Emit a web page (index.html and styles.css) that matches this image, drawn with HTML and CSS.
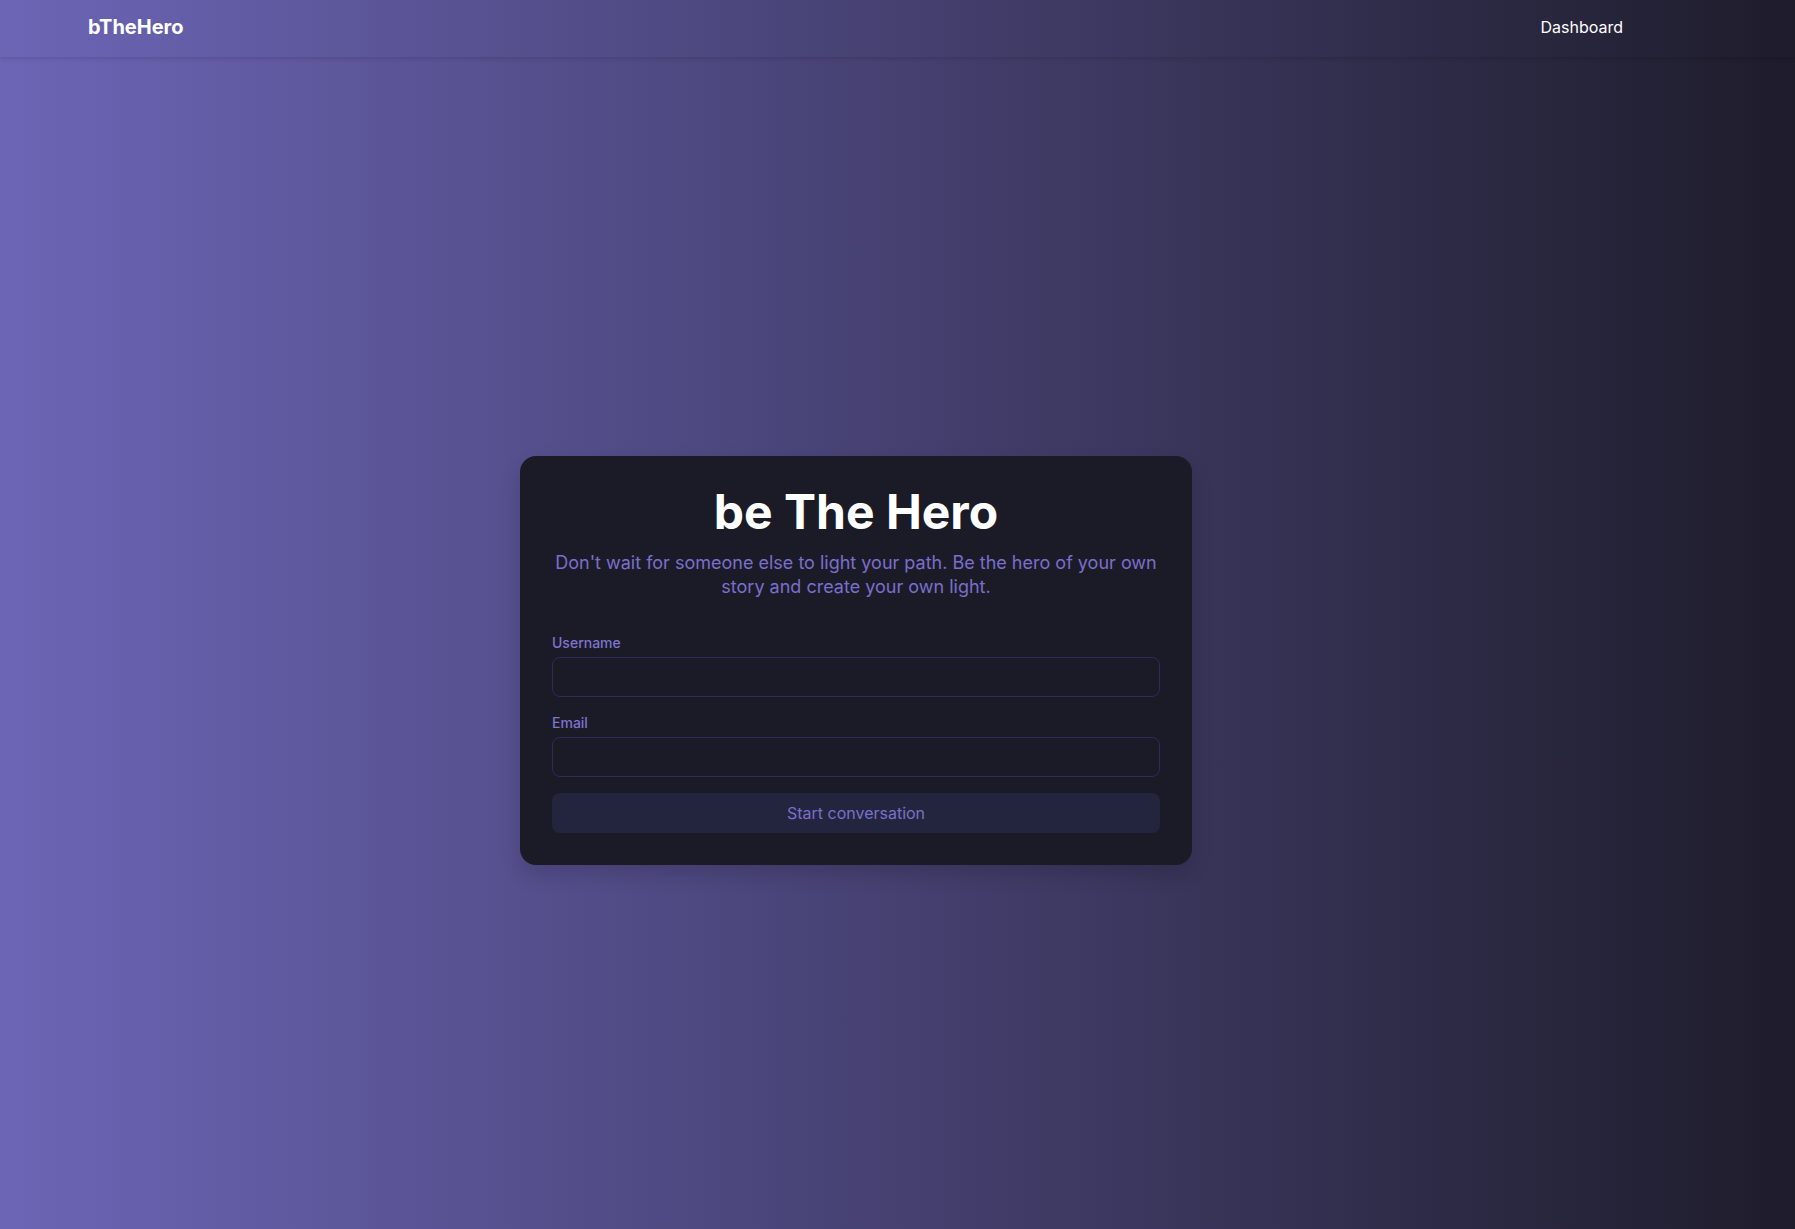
FILE: index.html
```
<!DOCTYPE html>
<html lang="en">
<head>
<meta charset="utf-8">
<title>bTheHero</title>
<link rel="stylesheet" href="styles.css">
</head>
<body>
<div class="page">
  <header class="topbar">
    <a class="brand" href="#">bTheHero</a>
    <nav class="nav"><a href="#">Dashboard</a></nav>
  </header>
  <main class="main">
    <section class="card">
      <h1 class="title">be The Hero</h1>
      <p class="subtitle">Don't wait for someone else to light your path. Be the hero of your own story and create your own light.</p>
      <form class="form">
        <div class="field">
          <label class="label" for="username">Username</label>
          <input class="input" id="username" type="text">
        </div>
        <div class="field">
          <label class="label" for="email">Email</label>
          <input class="input" id="email" type="email">
        </div>
        <button class="button" type="button">Start conversation</button>
      </form>
    </section>
  </main>
</div>
</body>
</html>
```
FILE: styles.css
```
* { box-sizing: border-box; }
html, body { margin: 0; padding: 0; height: 100%; }
body {
  font-family: Inter, "Noto Sans", sans-serif;
  background: linear-gradient(to right, #6c65b6 0%, #1e1c2b 100%);
  color: #fff;
}
.page {
  min-height: 100vh;
  display: flex;
  flex-direction: column;
}
.topbar {
  height: 57px;
  display: flex;
  align-items: center;
  justify-content: space-between;
  padding: 0 172px 0 88px;
  box-shadow: 0 2px 4px rgba(0,0,0,0.12);
  position: relative;
}
.brand {
  color: #fff;
  text-decoration: none;
  font-weight: 700;
  font-size: 20px;
  margin-top: -3px;
}
.nav a {
  color: #fff;
  text-decoration: none;
  font-size: 16px;
  margin-top: -3px;
  display: block;
}
.main {
  flex: 1;
  display: flex;
  align-items: center;
  justify-content: center;
  padding: 34px 83px 0 0;
}
.card {
  width: 672px;
  background: #1a1b27;
  border-radius: 16px;
  padding: 32px;
  box-shadow: 0 10px 20px rgba(0,0,0,0.15);
}
.title {
  margin: 0;
  text-align: center;
  font-size: 48px;
  line-height: 48px;
  font-weight: 700;
  color: #fff;
}
.subtitle {
  margin: 15px 0 0;
  text-align: center;
  font-size: 18px;
  line-height: 24px;
  color: #7a6fcc;
}
.form {
  margin-top: 34px;
  display: flex;
  flex-direction: column;
  gap: 16px;
}
.field {
  display: flex;
  flex-direction: column;
  gap: 4px;
}
.label {
  font-size: 14px;
  line-height: 20px;
  font-weight: 500;
  color: #7f74cf;
}
.input {
  height: 40px;
  background: #1a1b27;
  border: 1px solid #2e2c5a;
  border-radius: 8px;
  color: #fff;
  font-family: inherit;
  font-size: 16px;
  padding: 0 12px;
  outline: none;
}
.button {
  height: 40px;
  border: none;
  border-radius: 8px;
  background: #23253f;
  color: #7a70c8;
  font-family: inherit;
  font-size: 16px;
  cursor: pointer;
}
```
